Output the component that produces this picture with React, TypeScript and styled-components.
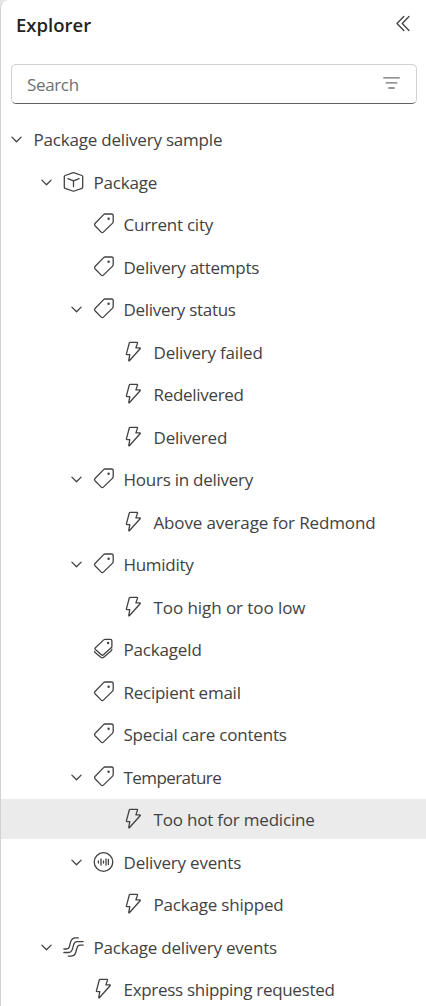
import React from "react";
import styled, { createGlobalStyle } from "styled-components";

const GlobalStyle = createGlobalStyle`
  * { box-sizing: border-box; }
  body { margin: 0; background: #e6e6e6; overflow: hidden; }
`;

const Panel = styled.main`
  width: 426px;
  height: 1006px;
  overflow: hidden;
  background: #fff;
  border-left: 1px solid #d1d1d1;
  border-top-left-radius: 8px;
  font-family: "Segoe UI", "Open Sans", "Noto Sans", sans-serif;
  color: #424242;
`;

const Header = styled.header`
  display: flex;
  align-items: center;
  justify-content: space-between;
  height: 48px;
  padding: 0 12px 0 15px;
`;

const Title = styled.h1`
  margin: 0;
  padding-top: 1px;
  font-size: 18.5px;
  line-height: 26px;
  font-weight: 600;
  letter-spacing: 0;
  color: #242424;
`;

const IconButton = styled.button`
  display: flex;
  padding: 0;
  border: 0;
  background: none;
  color: #424242;
`;

const SearchBox = styled.div`
  display: flex;
  align-items: center;
  justify-content: space-between;
  height: 40px;
  margin: 16px 9px 15px 10px;
  padding: 0 13px 0 15px;
  border: 1px solid #d1d1d1;
  border-bottom-color: #616161;
  border-radius: 5px;
`;

const Placeholder = styled.span`
  padding-top: 2px;
  font-size: 17px;
  line-height: 24px;
  letter-spacing: -0.35px;
  color: #707070;
`;

const Tree = styled.ul`
  display: flex;
  flex-direction: column;
  gap: 2.5px;
  margin: 0;
  padding: 0;
  list-style: none;
`;

const Row = styled.li<{ $level: number; $selected?: boolean }>`
  display: flex;
  align-items: center;
  flex: none;
  height: 40px;
  padding-left: ${(p) => p.$level * 30}px;
  background: ${(p) => (p.$selected ? "#ebebeb" : "transparent")};
`;

const Expander = styled.span`
  display: flex;
  justify-content: center;
  width: 30px;
`;

const IconCell = styled.span`
  display: flex;
  width: 24px;
  margin-right: 6px;
`;

const Label = styled.span<{ $tracking: number }>`
  padding: 2px 0 0 2.5px;
  font-size: 17px;
  line-height: 24px;
  white-space: nowrap;
  letter-spacing: ${(p) => p.$tracking}px;
`;

const Glyph = styled.svg`
  display: block;
  flex: none;
  fill: none;
  stroke: currentColor;
  stroke-width: 1.3;
  stroke-linecap: round;
  stroke-linejoin: round;
`;

const FilterGlyph = styled(Glyph)`
  color: #707070;
`;

type Kind = "cube" | "tag" | "tags" | "bolt" | "pulse" | "stream";

const drawings: Record<Kind, React.ReactNode> = {
  cube: (
    <>
      <path d="M11.7 2.8 4.1 5.5q-.8.3-.8 1.1v10.6q0 .8.8 1.1l7.6 2.7q.8.3 1.6 0l7.6-2.7q.8-.3.8-1.1V6.6q0-.8-.8-1.1l-7.6-2.7q-.8-.3-1.6 0Z" />
      <path d="m6.9 8.7 5.6 2.2 5.6-2.2M12.5 10.9v5.6" />
    </>
  ),
  tag: (
    <>
      <path d="M14 2h6.6q1.6 0 1.6 1.6v6q0 .9-.6 1.5l-9.2 9q-1.1 1.1-2.2 0L4 13.7q-1-1.1 0-2.2l8.6-8.9Q13.2 2 14 2Z" />
      <circle cx="17.6" cy="6.7" r="1.2" fill="currentColor" stroke="none" />
    </>
  ),
  tags: (
    <>
      <path d="M14 2.4h5.4q1.5 0 1.5 1.5v5.4q0 .8-.5 1.3l-8 7.1q-1 1-2 0l-6-5.2q-1-.9 0-1.8l8.3-7.8q.5-.5 1.3-.5Z" />
      <circle cx="17.1" cy="6" r="1.2" fill="currentColor" stroke="none" />
      <path d="M3.6 14.4q.1.8.7 1.3l5.6 4.6q1.5 1.1 2.8-.1l7.3-6.3q.9-.9.9-1.8" />
    </>
  ),
  bolt: (
    <path d="M9.1 2.3h6.8q.8 0 .6.8l-1.6 4.8h3.9q1 0 .3.8L8.6 20.5q-1 .9-.8-.4l1-5.4H6.1q-.9 0-.7-.9L8.3 3q.2-.7.8-.7Z" />
  ),
  pulse: (
    <>
      <circle cx="12.5" cy="12" r="9.3" />
      <path d="M7.4 10.9v2.2M10 9v6M12.5 10.9v2.2M15 9v6.2M17.4 9.3v5.2" />
    </>
  ),
  stream: (
    <>
      <path d="M2.9 14h2.7q2.2 0 2.8-2.3l1.1-4.3q1.1-4.5 5.4-4.5h2.4" />
      <path d="M2.9 17.5h3.9q3.7 0 4.7-3.7l1.2-4.3q.8-2.9 3.7-2.9h5.8" />
      <path d="M7.3 21.1h2.5q3.9 0 5-3.9l1.3-4.7q.6-2.4 2.9-2.4h3.2" />
    </>
  ),
};

interface Item {
  text: string;
  level: number;
  icon?: Kind;
  open?: boolean;
  selected?: boolean;
  tracking?: number;
}

const items: Item[] = [
  { text: "Package delivery sample", level: 0, open: true },
  { text: "Package", level: 1, icon: "cube", open: true },
  { text: "Current city", level: 2, icon: "tag", tracking: -0.25 },
  { text: "Delivery attempts", level: 2, icon: "tag", tracking: -0.25 },
  { text: "Delivery status", level: 2, icon: "tag", open: true, tracking: -0.3 },
  { text: "Delivery failed", level: 3, icon: "bolt" },
  { text: "Redelivered", level: 3, icon: "bolt", tracking: -0.3 },
  { text: "Delivered", level: 3, icon: "bolt" },
  { text: "Hours in delivery", level: 2, icon: "tag", open: true, tracking: -0.25 },
  { text: "Above average for Redmond", level: 3, icon: "bolt", tracking: -0.14 },
  { text: "Humidity", level: 2, icon: "tag", open: true, tracking: -0.3 },
  { text: "Too high or too low", level: 3, icon: "bolt", tracking: -0.07 },
  { text: "PackageId", level: 2, icon: "tags" },
  { text: "Recipient email", level: 2, icon: "tag", tracking: -0.25 },
  { text: "Special care contents", level: 2, icon: "tag" },
  { text: "Temperature", level: 2, icon: "tag", open: true, tracking: -0.57 },
  { text: "Too hot for medicine", level: 3, icon: "bolt", selected: true },
  { text: "Delivery events", level: 2, icon: "pulse", open: true },
  { text: "Package shipped", level: 3, icon: "bolt" },
  { text: "Package delivery events", level: 1, icon: "stream", open: true },
  { text: "Express shipping requested", level: 2, icon: "bolt", tracking: -0.3 },
];

export default function App() {
  return (
    <>
      <GlobalStyle />
      <Panel>
        <Header>
          <Title>Explorer</Title>
          <IconButton aria-label="Collapse">
            <Glyph width="20" height="20" viewBox="0 0 20 20">
              <path d="M9.8 2.5 3 9.5l6.8 7M15 2.5l-6.8 7 6.8 7" />
            </Glyph>
          </IconButton>
        </Header>
        <SearchBox>
          <Placeholder>Search</Placeholder>
          <FilterGlyph width="24" height="24" viewBox="0 0 24 24">
            <path d="M4.7 5.8h15.6M7.2 10.9h10.6M9.8 16h5.4" />
          </FilterGlyph>
        </SearchBox>
        <Tree>
          {items.map((item) => (
            <Row key={item.text} $level={item.level} $selected={item.selected}>
              <Expander>
                {item.open && (
                  <Glyph width="12" height="12" viewBox="0 0 12 12">
                    <path d="m1.9 4.1 4.6 4.6 4.6-4.6" />
                  </Glyph>
                )}
              </Expander>
              {item.icon && (
                <IconCell>
                  <Glyph width="24" height="24" viewBox="0 0 24 24">
                    {drawings[item.icon]}
                  </Glyph>
                </IconCell>
              )}
              <Label $tracking={item.tracking ?? -0.2}>{item.text}</Label>
            </Row>
          ))}
        </Tree>
      </Panel>
    </>
  );
}
